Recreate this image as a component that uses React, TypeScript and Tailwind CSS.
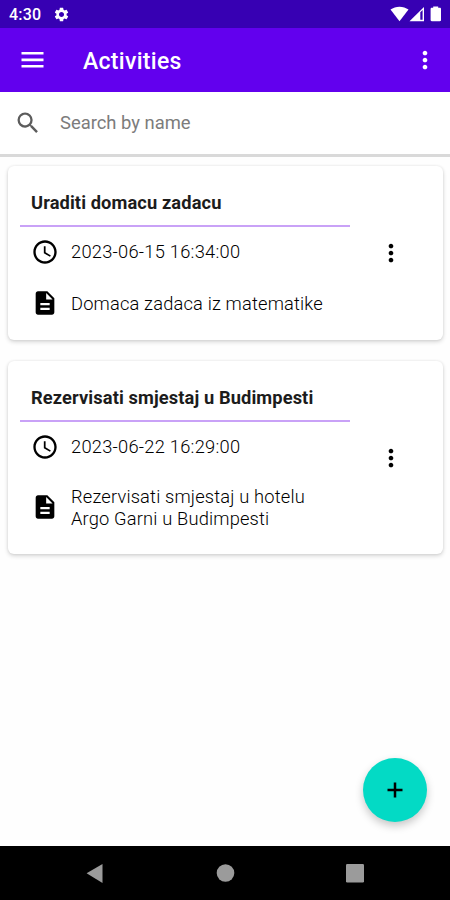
import { MdAccessTime, MdDescription, MdMoreVert, MdSearch, MdSettings } from 'react-icons/md';

type Activity = {
  id: number;
  name: string;
  time: string;
  description: string;
};

const activities: Activity[] = [
  {
    id: 1,
    name: 'Uraditi domacu zadacu',
    time: '2023-06-15 16:34:00',
    description: 'Domaca zadaca iz matematike',
  },
  {
    id: 2,
    name: 'Rezervisati smjestaj u Budimpesti',
    time: '2023-06-22 16:29:00',
    description: 'Rezervisati smjestaj u hotelu Argo Garni u Budimpesti',
  },
];

function StatusBar() {
  return (
    <div className="flex h-7 shrink-0 items-center bg-[#3700b3] pl-[9px] pr-2 text-white">
      <span className="w-[44px] pt-px text-base font-medium leading-7 tracking-[0.2px]">4:30</span>
      <MdSettings className="h-[17px] w-[17px]" />
      <svg className="ml-auto h-4 w-[52px]" viewBox="0 0 52 16" fill="currentColor">
        <path d="M0.5 3.6C5.5-.3 13.5-.3 18.5 3.6L9.5 15.2z" />
        <path fillRule="evenodd" d="M19.5 15.2L34 1V15.2zM30.3 6.2V13.8H32.6V4z" />
        <path d="M43.2 1.7V.6h5v1.1h1.6c.8 0 1.2.5 1.2 1.2v11.1c0 .8-.5 1.2-1.2 1.2h-8c-.8 0-1.2-.5-1.2-1.2V2.9c0-.7.5-1.2 1.2-1.2z" />
      </svg>
    </div>
  );
}

function AppBar() {
  return (
    <header className="flex h-16 shrink-0 items-center bg-[#6200ee] pl-[21px] pr-[11px] text-white">
      <button aria-label="Menu" className="w-[23px]">
        <svg className="h-4 w-[23px]" viewBox="0 0 23 16" fill="currentColor">
          <path d="M.5 0h22v2.6H.5zM.5 6.6h22v2.6H.5zM.5 13h22v2.6H.5z" />
        </svg>
      </button>
      <h1 className="ml-[39px] pt-1 text-[23px] font-medium tracking-[0.3px]">Activities</h1>
      <button aria-label="More options" className="ml-auto">
        <MdMoreVert className="h-[28px] w-[28px]" />
      </button>
    </header>
  );
}

function SearchBar() {
  return (
    <div className="flex h-[65px] shrink-0 items-center border-b-[3px] border-[#d9d9d9] pl-[14px]">
      <MdSearch className="h-[28px] w-[28px] text-[#5c5c5c]" />
      <input
        type="text"
        placeholder="Search by name"
        className="ml-[18px] w-80 text-[18.4px] outline-none placeholder:text-[#7c7c7c]"
      />
    </div>
  );
}

function ActivityCard({ activity }: { activity: Activity }) {
  return (
    <div className="flex rounded-md bg-white p-3 shadow-[0_2px_4px_rgba(0,0,0,0.16),0_0_3px_rgba(0,0,0,0.08)]">
      <div className="w-[330px]">
        <h2 className="h-[49px] border-b-2 border-[#c9a2f7] pl-[11px] text-[18.3px] font-bold leading-[49px] tracking-[0.1px] text-[#1c1c1c]">
          {activity.name}
        </h2>
        <div className="flex h-[50px] items-center pl-[11px]">
          <MdAccessTime className="h-[28px] w-[28px] shrink-0" />
          <p className="ml-3 text-[18.3px] font-light tracking-[0.25px]">{activity.time}</p>
        </div>
        <div className="flex min-h-[51px] items-center py-3 pl-[11px]">
          <MdDescription className="-my-1 h-[28px] w-[28px] shrink-0" />
          <p className="ml-3 w-[260px] pt-0.5 text-[18.3px] font-light leading-[22px] tracking-[0.17px]">
            {activity.description}
          </p>
        </div>
      </div>
      <button aria-label="Activity options" className="flex flex-1 items-center justify-center">
        <MdMoreVert className="h-[28px] w-[28px]" />
      </button>
    </div>
  );
}

function NavigationBar() {
  return (
    <nav className="h-[54px] shrink-0 bg-black text-[#9b9b9b]">
      <svg className="h-[54px] w-full" viewBox="0 0 450 54" fill="currentColor">
        <path d="M86.6 27.2L102.5 18V37z" />
        <circle cx="225.5" cy="27" r="8.8" />
        <rect x="346" y="18" width="18" height="18.5" rx="1.2" />
      </svg>
    </nav>
  );
}

export default function App() {
  return (
    <div className="relative flex h-[900px] w-[450px] flex-col overflow-hidden bg-white font-['Roboto',sans-serif] text-black">
      <StatusBar />
      <AppBar />
      <SearchBar />
      <main className="flex flex-1 flex-col gap-[21px] bg-[#fefefe] pl-2 pr-[7px] pt-[9px]">
        {activities.map((activity) => (
          <ActivityCard key={activity.id} activity={activity} />
        ))}
      </main>
      <NavigationBar />

      {/* Add activity button */}
      <button
        aria-label="Add activity"
        className="absolute bottom-[78px] right-[23px] flex h-16 w-16 items-center justify-center rounded-full bg-[#03dac5] shadow-[0_4px_8px_rgba(0,0,0,0.22)]"
      >
        <svg className="h-4 w-4" viewBox="0 0 16 16" fill="none" stroke="currentColor" strokeWidth="2.5">
          <path d="M8 .5v15M.5 8h15" />
        </svg>
      </button>
    </div>
  );
}
